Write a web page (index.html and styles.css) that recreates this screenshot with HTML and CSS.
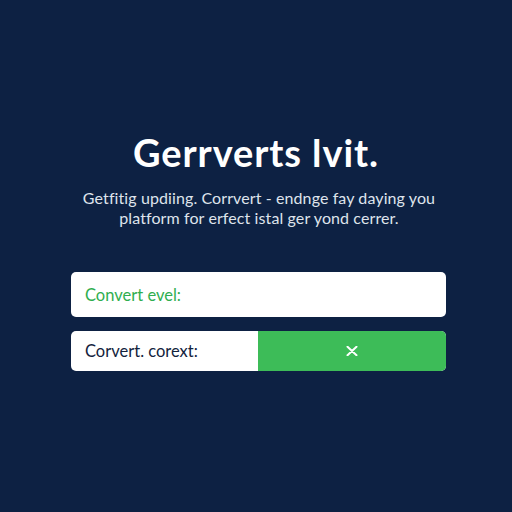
FILE: index.html
```html
<!DOCTYPE html>
<html lang="en">

<head>
    <meta charset="UTF-8" />
    <meta name="viewport" content="width=device-width, initial-scale=1.0" />
    <title>Gerrverts lvit</title>
    <link rel="stylesheet" href="styles.css">
</head>

<body>
    <div class="hero">
        <h1>Gerrverts lvit.</h1>
        <p class="lead">Getfitig updiing. Corrvert - endnge fay daying you<br>platform for erfect istal ger yond cerrer.</p>

        <div class="field">
            <span class="field-label">Convert evel:</span>
        </div>

        <div class="field split">
            <span class="field-label dark">Corvert. corext:</span>
            <button class="clear" aria-label="Clear">
                <svg width="12" height="10" viewBox="0 0 12 10">
                    <path d="M1.5 0.8 L10.5 9.2 M10.5 0.8 L1.5 9.2" stroke="#fff" stroke-width="2" stroke-linecap="round" />
                </svg>
            </button>
        </div>
    </div>
</body>

</html>
```

FILE: styles.css
```css
* {
    margin: 0;
    padding: 0;
    box-sizing: border-box;
}

body {
    font-family: Lato, "Liberation Sans", sans-serif;
    background-color: #0d2143;
    height: 100vh;
    display: flex;
    justify-content: center;
}

.hero {
    width: 420px;
    display: flex;
    flex-direction: column;
    align-items: center;
    padding-top: 130px;
}

h1 {
    color: #fff;
    font-size: 38px;
    font-weight: 700;
    letter-spacing: 0.9px;
    line-height: 44px;
}

.lead {
    margin-top: 14px;
    margin-left: 6px;
    color: #dfe4ec;
    font-size: 16px;
    letter-spacing: 0.1px;
    line-height: 20px;
    text-align: center;
    white-space: nowrap;
}

.field {
    width: 375px;
    height: 45px;
    margin-top: 44px;
    margin-left: 5px;
    background-color: #fff;
    border-radius: 5px;
    display: flex;
    align-items: center;
    overflow: hidden;
}

.field-label {
    padding-left: 14px;
    color: #2fae4f;
    font-size: 16.5px;
}

.field-label.dark {
    color: #13233d;
}

.split {
    height: 40px;
    margin-top: 14px;
}

.split .field-label {
    flex: 1;
}

.clear {
    width: 188px;
    height: 100%;
    border: none;
    background-color: #3dbc58;
    display: flex;
    align-items: center;
    justify-content: center;
}
```
